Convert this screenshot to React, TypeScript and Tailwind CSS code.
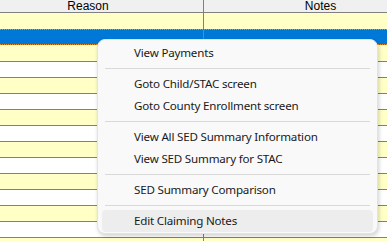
import React from "react";

type Item = { label: string } | "sep";

const menuItems: Item[] = [
  { label: "View Payments" },
  "sep",
  { label: "Goto Child/STAC screen" },
  { label: "Goto County Enrollment screen" },
  "sep",
  { label: "View All SED Summary Information" },
  { label: "View SED Summary for STAC" },
  "sep",
  { label: "SED Summary Comparison" },
  "sep",
  { label: "Edit Claiming Notes" },
];

const rowCount = 15;

function GridRow({ index }: { index: number }) {
  const selected = index === 1;
  const yellow = index % 2 === 0;
  // rows right below the header and the selection have no own top line
  const topLine = index > 2;

  if (selected) {
    return (
      <div className="flex h-[16px] border-y border-dotted border-y-[#e8892a] bg-[#0078d7]">
        <div className="w-[231px] shrink-0 border-r border-[#808080]" />
        <div className="w-[233px] shrink-0" />
      </div>
    );
  }

  return (
    <div
      className={`flex h-[16px] ${yellow ? "bg-[#ffffc6]" : "bg-white"} ${
        topLine ? "border-t border-[#808080]" : ""
      }`}
    >
      <div className="w-[231px] shrink-0 border-r border-[#808080]" />
      <div className="w-[233px] shrink-0" />
    </div>
  );
}

export default function App() {
  return (
    <div className="relative h-[241px] w-[387px] overflow-hidden bg-white">
      {/* GRID (scrolled a bit to the right) */}
      <div className="ml-[-27px] w-[464px]" style={{ fontFamily: '"Liberation Sans", Arial, sans-serif' }}>
        <div className="flex h-[13px] border-b border-[#808080] bg-[#f0f0f0] text-[12px] leading-[12px] text-black">
          <div className="w-[231px] shrink-0 border-r border-[#808080] text-center">Reason</div>
          <div className="w-[233px] shrink-0 text-center">Notes</div>
        </div>
        {Array.from({ length: rowCount }).map((_, i) => (
          <GridRow key={i} index={i} />
        ))}
      </div>

      {/* CONTEXT MENU */}
      <div
        className="absolute left-[97px] top-[39px] w-[281px] rounded-[8px] border border-[#e3e3e3] bg-[#f9f9f9] px-[4px] pt-[2px] pb-[1px] text-[11.6px] tracking-[-0.2px] text-[#1a1a1a] shadow-[1px_2px_4px_rgba(0,0,0,0.18)]"
        style={{ fontFamily: '"Noto Sans", "Open Sans", sans-serif' }}
      >
        {menuItems.map((item, i) =>
          item === "sep" ? (
            <div key={i} className="flex h-[9px] items-center px-[3px]">
              <div className="h-px w-full bg-[#d9d9d9]" />
            </div>
          ) : (
            <div
              key={i}
              className={`flex h-[22px] items-center rounded-[4px] pl-[32px] ${
                i === menuItems.length - 1 ? "bg-[#ededed]" : ""
              }`}
            >
              {item.label}
            </div>
          )
        )}
      </div>
    </div>
  );
}
